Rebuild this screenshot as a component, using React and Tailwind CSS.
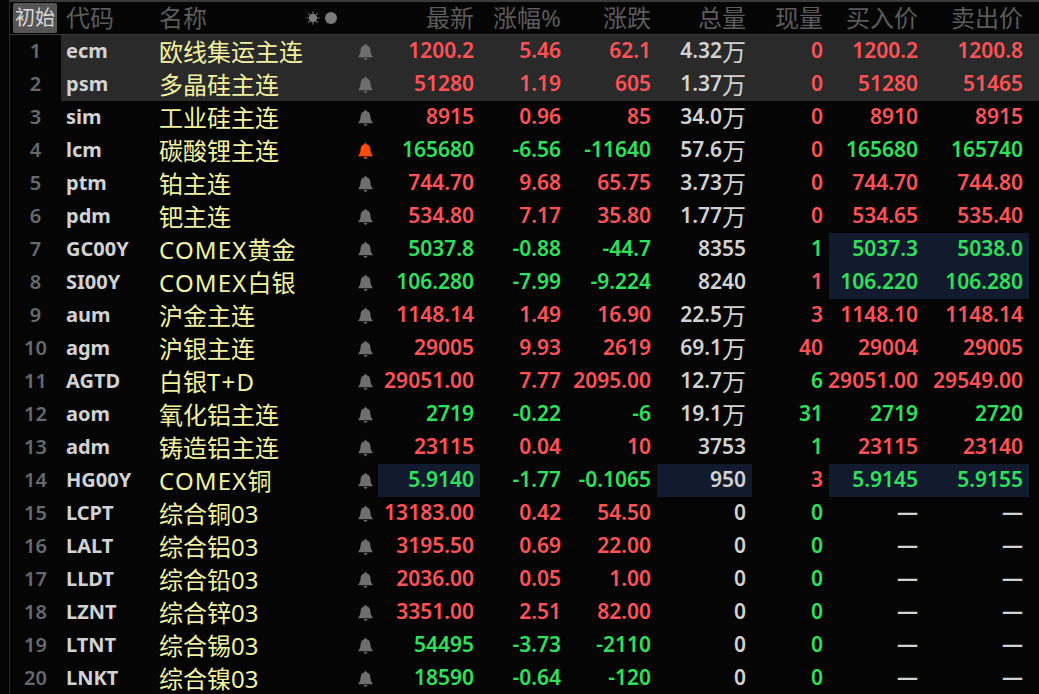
import React from 'react';

const R = 'text-[#ff5257]';
const G = 'text-[#2ee05c]';
const W = 'text-[#d2d2d2]';

// [code, name, latest, pct, chg, vol, volUnit, now, buy, sell, color, nowColor, buyColor, sellColor]
const ROWS = [
    ['ecm', '欧线集运主连', '1200.2', '5.46', '62.1', '4.32', '万', '0', '1200.2', '1200.8', R, R, R, R],
    ['psm', '多晶硅主连', '51280', '1.19', '605', '1.37', '万', '0', '51280', '51465', R, R, R, R],
    ['sim', '工业硅主连', '8915', '0.96', '85', '34.0', '万', '0', '8910', '8915', R, R, R, R],
    ['lcm', '碳酸锂主连', '165680', '-6.56', '-11640', '57.6', '万', '0', '165680', '165740', G, R, G, G],
    ['ptm', '铂主连', '744.70', '9.68', '65.75', '3.73', '万', '0', '744.70', '744.80', R, R, R, R],
    ['pdm', '钯主连', '534.80', '7.17', '35.80', '1.77', '万', '0', '534.65', '535.40', R, R, R, R],
    ['GC00Y', 'COMEX黄金', '5037.8', '-0.88', '-44.7', '8355', '', '1', '5037.3', '5038.0', G, G, G, G],
    ['SI00Y', 'COMEX白银', '106.280', '-7.99', '-9.224', '8240', '', '1', '106.220', '106.280', G, R, G, G],
    ['aum', '沪金主连', '1148.14', '1.49', '16.90', '22.5', '万', '3', '1148.10', '1148.14', R, R, R, R],
    ['agm', '沪银主连', '29005', '9.93', '2619', '69.1', '万', '40', '29004', '29005', R, R, R, R],
    ['AGTD', '白银T+D', '29051.00', '7.77', '2095.00', '12.7', '万', '6', '29051.00', '29549.00', R, G, R, R],
    ['aom', '氧化铝主连', '2719', '-0.22', '-6', '19.1', '万', '31', '2719', '2720', G, G, G, G],
    ['adm', '铸造铝主连', '23115', '0.04', '10', '3753', '', '1', '23115', '23140', R, G, R, R],
    ['HG00Y', 'COMEX铜', '5.9140', '-1.77', '-0.1065', '950', '', '3', '5.9145', '5.9155', G, R, G, G],
    ['LCPT', '综合铜03', '13183.00', '0.42', '54.50', '0', '', '0', '—', '—', R, G, W, W],
    ['LALT', '综合铝03', '3195.50', '0.69', '22.00', '0', '', '0', '—', '—', R, G, W, W],
    ['LLDT', '综合铅03', '2036.00', '0.05', '1.00', '0', '', '0', '—', '—', R, G, W, W],
    ['LZNT', '综合锌03', '3351.00', '2.51', '82.00', '0', '', '0', '—', '—', R, G, W, W],
    ['LTNT', '综合锡03', '54495', '-3.73', '-2110', '0', '', '0', '—', '—', G, G, W, W],
    ['LNKT', '综合镍03', '18590', '-0.64', '-120', '0', '', '0', '—', '—', G, G, W, W],
];

const NUM_CELL = 'flex items-center justify-end pr-[6px] pb-[2px] h-full whitespace-nowrap text-[21px]';

function Bell({color}) {
    return (
        <svg width="17" height="18" viewBox="0 0 16 17" fill={color}>
            <path d="M8 0.5 L9.2 2.2 C11.4 2.8 12.4 4.4 12.6 6.5 L13 10 L15 13.4 L1 13.4 L3 10 L3.4 6.5 C3.6 4.4 4.6 2.8 6.8 2.2 Z" />
            <path d="M6 14.2 L10 14.2 L8 16.4 Z" />
        </svg>
    );
}

function SunDot() {
    return (
        <svg width="14" height="14" viewBox="0 0 14 14" fill="#7a7a7a" stroke="#7a7a7a">
            <circle cx="7" cy="7" r="4.2" stroke="none" />
            <path strokeWidth="1.2" d="M7 0.5V2.5M7 11.5V13.5M0.5 7H2.5M11.5 7H13.5M2.4 2.4L3.8 3.8M10.2 10.2L11.6 11.6M2.4 11.6L3.8 10.2M10.2 3.8L11.6 2.4" />
        </svg>
    );
}

function Row({row, index}) {
    const [code, name, latest, pct, chg, vol, unit, now, buy, sell, color, nowColor, buyColor, sellColor] = row;
    const selected = index < 2;
    const quoteBg = code === 'GC00Y' || code === 'SI00Y' || code === 'HG00Y' ? 'bg-[#121a2e]' : '';
    const tradeBg = code === 'HG00Y' ? 'bg-[#121a2e]' : '';
    // latin part of the name runs wider than the CJK font's own latin
    const nameParts = name.split(/([A-Z+]+)/);
    return (
        <div className="flex h-[33px] text-[20px] font-semibold leading-none">
            <div className="w-[51px] shrink-0 flex items-center justify-center pb-[2px] text-[#666a6e]">{index + 1}</div>
            <div className={`flex-1 grid grid-cols-[98px_195px_24px_102px_87px_90px_95px_77px_95px_105px] ${selected ? 'bg-[#2a2a2a]' : ''}`}>
                <div className={`flex items-center pl-[5px] pb-[2px] h-full font-bold ${W}`}>{code}</div>
                <div className="flex items-center h-full text-[#f2f2a0] text-[24px] font-normal whitespace-nowrap">
                    {nameParts.map((part, i) => (
                        <span key={i} className={/[A-Z+]/.test(part) ? 'tracking-[1.2px]' : ''}>{part}</span>
                    ))}
                </div>
                <div className="flex items-center h-full pl-[3px]"><Bell color={code === 'lcm' ? '#ff4c0a' : '#6e6e6e'} /></div>
                <div className={`${NUM_CELL} ${color} ${code === 'HG00Y' ? 'bg-[#121a2e]' : ''}`}>{latest}</div>
                <div className={`${NUM_CELL} ${color}`}>{pct}</div>
                <div className={`${NUM_CELL} ${color}`}>{chg}</div>
                <div className={`${NUM_CELL} ${W} ${tradeBg}`}>
                    {vol}
                    {unit && <span className="text-[24px] font-normal pt-[2px]">{unit}</span>}
                </div>
                <div className={`${NUM_CELL} ${nowColor}`}>{now}</div>
                <div className={`${NUM_CELL} ${buyColor} ${quoteBg}`}>{buy}</div>
                <div className={`${NUM_CELL} ${sellColor} ${quoteBg}`}>{sell}</div>
            </div>
        </div>
    );
}

export default function App() {
    return (
        <div className="w-[1039px] h-[694px] overflow-hidden bg-[#050505]" style={{fontFamily: '"Noto Sans", "Noto Sans CJK SC", sans-serif'}}>
            <div className="h-[2px] ml-[9px] bg-[#3a3a3a]" />
            <div className="ml-[9px] border-l border-[#2a2a2a]">
                <div className="grid grid-cols-[47px_93px_147px_81px_102px_87px_90px_95px_77px_95px_105px] h-[33px] items-center border-b border-[#3a3a3a] text-[24px] leading-none text-[#5c5c5c] whitespace-nowrap">
                    <div className="pl-[3px]">
                        <div className="w-[44px] h-[30px] rounded-[2px] bg-[#555555] text-[#d8d8d8] text-[20px] flex items-center justify-center">初始</div>
                    </div>
                    <div className="pl-[9px]">代码</div>
                    <div className="pl-[9px]">名称</div>
                    <div className="flex items-center gap-[5px] pl-[9px]">
                        <SunDot />
                        <span className="w-[12px] h-[12px] rounded-full bg-[#7a7a7a]" />
                    </div>
                    <div className="text-right pr-[6px]">最新</div>
                    <div className="text-right pr-[6px]">涨幅%</div>
                    <div className="text-right pr-[6px]">涨跌</div>
                    <div className="text-right pr-[6px]">总量</div>
                    <div className="text-right pr-[6px]">现量</div>
                    <div className="text-right pr-[6px]">买入价</div>
                    <div className="text-right pr-[6px]">卖出价</div>
                </div>
                {ROWS.map((row, i) => <Row key={row[0]} row={row} index={i} />)}
            </div>
        </div>
    );
}
